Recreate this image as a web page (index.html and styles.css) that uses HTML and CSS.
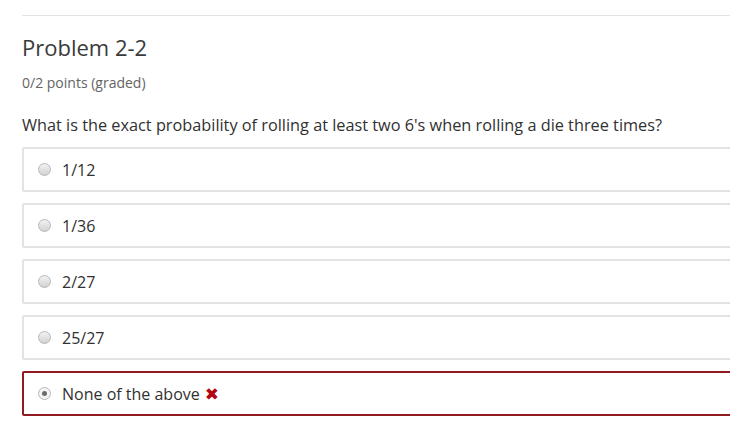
FILE: index.html
```html
<!DOCTYPE html>
<html>
<head>
<meta charset="utf-8">
<link rel="stylesheet" href="styles.css">
</head>
<body>
<div class="problem">
  <h3 class="title">Problem 2-2</h3>
  <div class="points">0/2 points (graded)</div>
  <p class="question">What is the exact probability of rolling at least two 6's when rolling a die three times?</p>
  <div class="choices">
    <label class="choice"><span class="radio"></span><span class="text">1/12</span></label>
    <label class="choice"><span class="radio"></span><span class="text">1/36</span></label>
    <label class="choice"><span class="radio"></span><span class="text">2/27</span></label>
    <label class="choice"><span class="radio"></span><span class="text">25/27</span></label>
    <label class="choice incorrect"><span class="radio checked"></span><span class="text">None of the above</span><span class="mark">✖</span></label>
  </div>
</div>
</body>
</html>
```
FILE: styles.css
```css
html, body {
  margin: 0;
  padding: 0;
  background: #fff;
  overflow: hidden;
}
body {
  font-family: "Open Sans", "DejaVu Sans", sans-serif;
  color: #313131;
  width: 730px;
}
.problem {
  margin-left: 22px;
  margin-top: 15px;
  width: 740px;
  border-top: 1px solid #e2e2e2;
}
.title {
  margin: 16px 0 0 0;
  font-size: 22px;
  font-weight: 400;
  line-height: 30px;
  color: #3a3a3a;
}
.points {
  margin-top: 12px;
  font-size: 14px;
  line-height: 18px;
  color: #646464;
}
.question {
  margin: 21px 0 0 0;
  font-size: 16.3px;
  line-height: 24px;
  color: #313131;
}
.choices {
  margin-top: 10px;
  display: flex;
  flex-direction: column;
  gap: 11px;
}
.choice {
  display: flex;
  align-items: center;
  height: 41px;
  border: 2px solid #e3e3e3;
  border-radius: 2px;
  padding-left: 15px;
  font-size: 16px;
  color: #313131;
}
.choice.incorrect {
  border-color: #8f1a1f;
}
.radio {
  width: 13px;
  height: 13px;
  border-radius: 50%;
  border: 1px solid #b8b8b8;
  background: linear-gradient(#f2f2f2, #d2d2d2);
  box-sizing: border-box;
  margin-right: 11px;
  margin-left: -1px;
  position: relative;
}
.radio.checked {
  background: #f4f4f4;
}
.radio.checked::after {
  content: "";
  position: absolute;
  left: 3px;
  top: 3px;
  width: 5px;
  height: 5px;
  border-radius: 50%;
  background: #6b6b6b;
}
.mark {
  color: #b20610;
  font-size: 17px;
  margin-left: 5px;
  font-family: "DejaVu Sans", sans-serif;
  font-weight: bold;
}
```
